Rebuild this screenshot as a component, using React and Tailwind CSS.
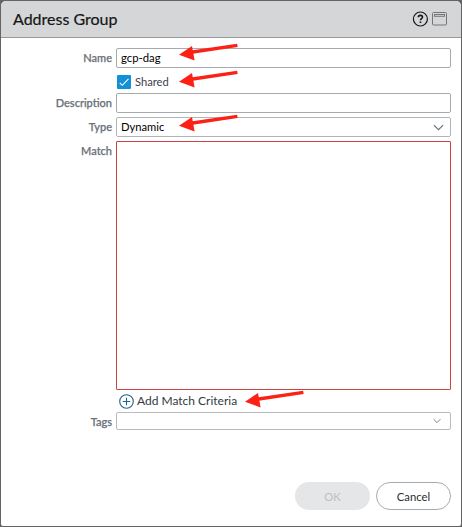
function Arrow({ className }) {
  return (
    <svg className={`pointer-events-none absolute ${className}`} width="60" height="20" viewBox="0 0 60 20">
      <path d="M12 11.3 58.4 4.4" stroke="#fc2015" strokeWidth="3.4" fill="none" />
      <path d="M0 13.8 13 5 15.6 19.4Z" fill="#fc2015" />
    </svg>
  );
}

function Chevron({ size }) {
  return (
    <svg width={size} height={size} viewBox="0 0 10 10" fill="none" stroke="#6b727b" strokeWidth="1.1">
      <path d="M0.8 2.8 5 7 9.2 2.8" />
    </svg>
  );
}

function Label({ children }) {
  return <div className="w-[111px] shrink-0 text-right text-[11px] leading-5 font-medium text-[#6a7078] [-webkit-text-stroke:0.25px_#6a7078]">{children}</div>;
}

export default function App() {
  return (
    <div className="h-[527px] w-[462px] bg-[#646466] p-px font-['Lato','Liberation_Sans',sans-serif]">
      <div className="flex h-[525px] w-[460px] flex-col overflow-hidden rounded-t-[5px] rounded-b-[2px] bg-white">
        <header className="flex h-[37px] shrink-0 items-center justify-between border-b border-[#98999b] bg-[#d5d6d8] pr-[14px] pl-3">
          <h1 className="text-[16px] leading-5 text-[#161616] [-webkit-text-stroke:0.2px_#161616]">Address Group</h1>
          <div className="flex items-center gap-1">
            <svg width="16" height="16" viewBox="0 0 16 16" fill="none">
              <circle cx="8.4" cy="8" r="7" stroke="#171717" strokeWidth="1.2" />
              <path d="M6.3 6.2C6.3 4.9 7.2 4.4 8.4 4.4s2.1.6 2.1 1.7c0 1.5-2 1.5-2 3.2" stroke="#171717" strokeWidth="1.6" />
              <path d="M7.6 10.4h1.7V12H7.6z" fill="#171717" />
            </svg>
            <svg width="15" height="14" viewBox="0 0 15 14" fill="none" stroke="#747678">
              <rect x="0.5" y="0.5" width="14" height="12.5" rx="1" />
              <rect x="2.5" y="2.5" width="10" height="1.8" />
            </svg>
          </div>
        </header>

        <main className="flex flex-col pt-[10px]">
          <div className="flex h-5 gap-1">
            <Label>Name</Label>
            <div className="relative h-5 w-[335px] rounded-[2px] border border-[#a6abad] pl-1 text-[11.3px] leading-[18px] text-black">
              gcp-dag
              <Arrow className="-top-[8px] left-[62px]" />
            </div>
          </div>
          <div className="relative mt-[7px] ml-[116px] flex h-[14px] items-center gap-1">
            <span className="flex size-[14px] items-center justify-center rounded-[1px] bg-[#1490d8]">
              <svg width="14" height="14" viewBox="0 0 14 14" fill="none" stroke="white" strokeWidth="1.1">
                <path d="M2.8 7.8 5.3 10.3 11.5 3.8" />
              </svg>
            </span>
            <span className="text-[11.2px] leading-[14px] text-[#3b424b]">Shared</span>
            <Arrow className="-top-[7px] left-[62px]" />
          </div>
          <div className="mt-1 flex h-5 gap-1">
            <Label>Description</Label>
            <div className="h-5 w-[335px] rounded-[2px] border border-[#a6abad]" />
          </div>
          <div className="mt-1 flex h-5 gap-1">
            <Label>Type</Label>
            <div className="relative flex h-5 w-[335px] items-center justify-between rounded-[2px] border border-[#b2b5b8] pr-[6px] pl-1 text-[11.2px] leading-[18px] text-black">
              Dynamic
              <Chevron size={11} />
              <Arrow className="-top-[6px] left-[62px]" />
            </div>
          </div>
          <div className="mt-1 flex h-[249px] gap-1">
            <Label>Match</Label>
            <div className="h-[249px] w-[335px] rounded-[1px] border border-[#cf4145]" />
          </div>
          <div className="relative mt-[3px] ml-[118px] flex h-4 items-center gap-[3px]">
            <svg width="15" height="15" viewBox="0 0 15 15" fill="none" stroke="#1c6488" strokeWidth="1.1">
              <circle cx="7.5" cy="7.5" r="6.8" />
              <path d="M7.5 3.8v7.4M3.8 7.5h7.4" />
            </svg>
            <span className="text-[12px] leading-4 text-[#333a43]">Add Match Criteria</span>
            <Arrow className="-top-[5px] left-[126px]" />
          </div>
          <div className="mt-[3px] flex h-[18px] gap-1">
            <Label>Tags</Label>
            <div className="flex h-[18px] w-[335px] items-center justify-end rounded-[2px] border border-[#b8bbbf] pr-[9px]">
              <Chevron size={8} />
            </div>
          </div>
        </main>

        <footer className="mt-auto flex justify-end gap-[6px] pr-[10px] pb-4">
          <button className="h-7 w-[75px] rounded-full bg-[#e5e6e8] pt-[2px] text-[11.3px] text-[#bec0c3]">OK</button>
          <button className="h-7 w-[75px] rounded-full border border-[#a8abae] pt-[2px] text-[11.3px] text-[#292e36]">Cancel</button>
        </footer>
      </div>
    </div>
  );
}
